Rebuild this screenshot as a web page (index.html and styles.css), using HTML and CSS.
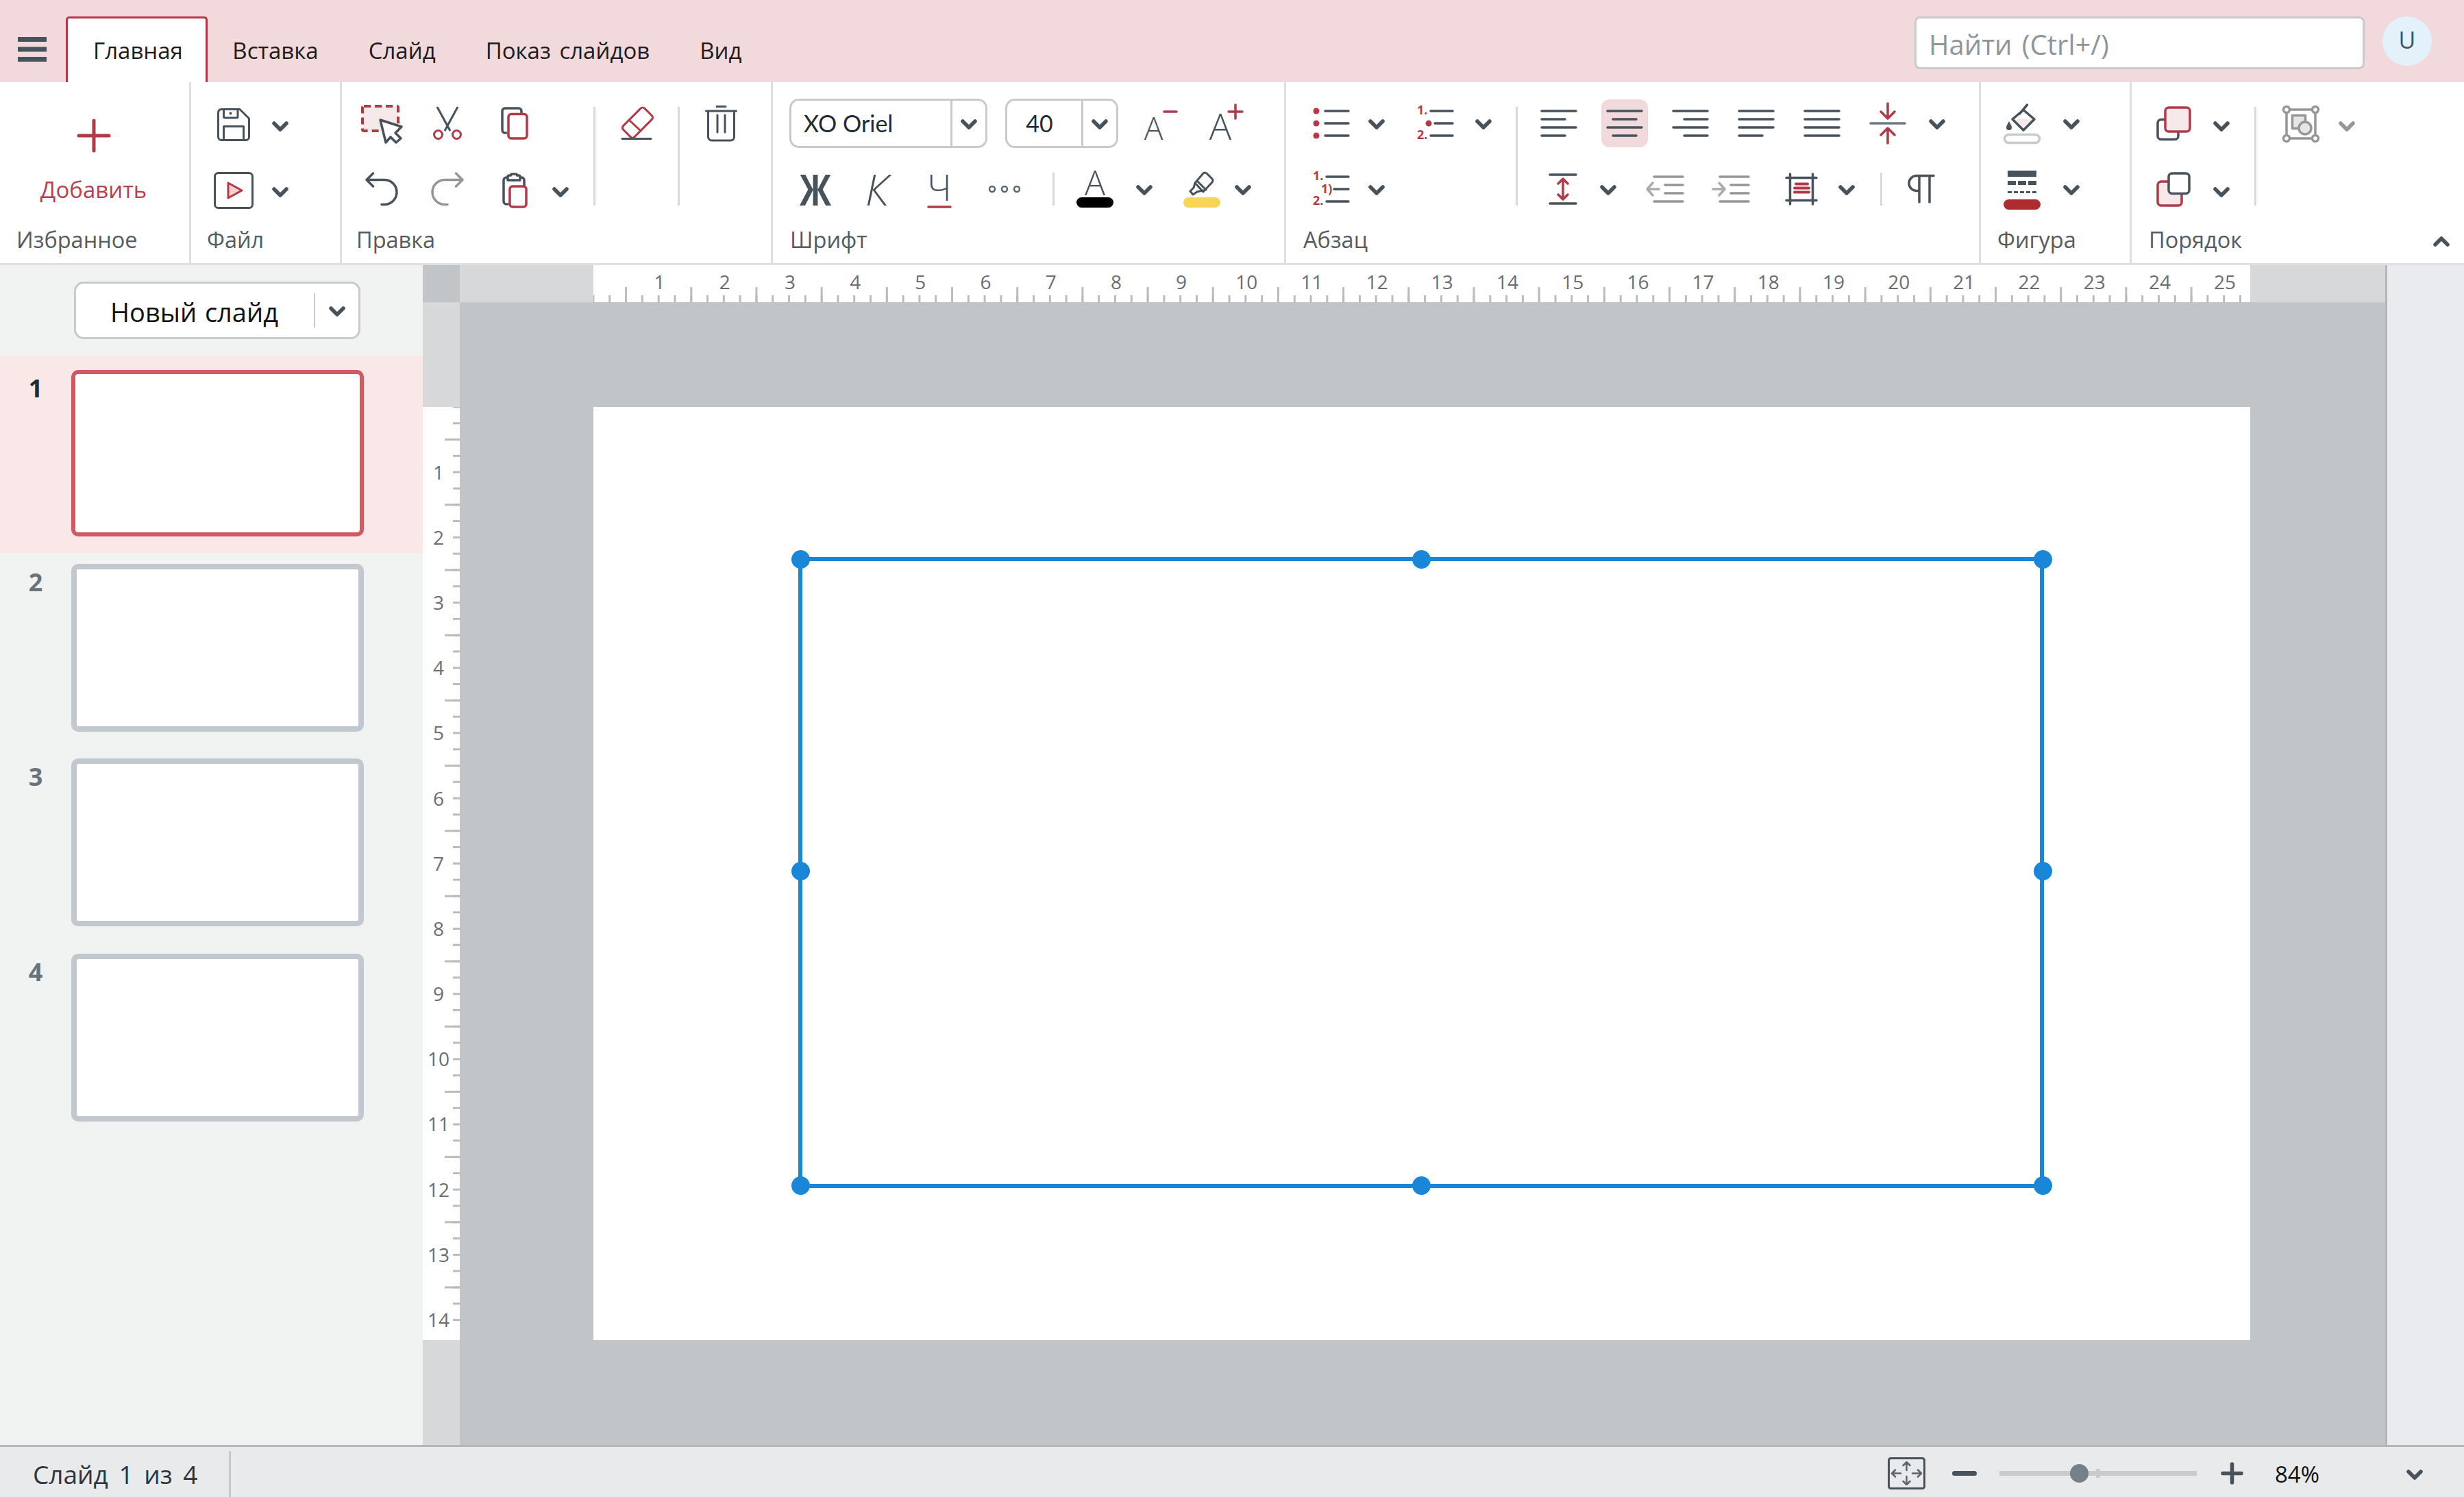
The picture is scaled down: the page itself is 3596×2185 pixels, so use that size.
FILE: index.html
```html
<!DOCTYPE html>
<html lang="ru">
<head>
    <meta charset="UTF-8">
    <title>Презентация</title>
    <link rel="stylesheet" href="styles.css">
</head>
<body>
    <svg class="defs"><symbol id="chev" viewBox="0 0 24 15"><path d="M3 3l9 9 9-9"/></symbol></svg>

    <header class="topbar">
        <svg class="burger" width="42" height="36" viewBox="0 0 42 36"><rect width="42" height="7"/><rect y="14.500" width="42" height="7"/><rect y="29" width="42" height="7"/></svg>
        <nav class="tabs">
            <a class="tab active">Главная</a>
            <a class="tab">Вставка</a>
            <a class="tab">Слайд</a>
            <a class="tab">Показ слайдов</a>
            <a class="tab">Вид</a>
        </nav>
        <div class="search">Найти (Ctrl+/)</div>
        <div class="avatar">U</div>
    </header>

    <section class="ribbon">
        <div class="group g-fav">
            <div class="add-btn">
                <svg class="ic" width="48" height="48" viewBox="0 0 48 48"><path class="r thick" d="M24 2v44M2 24h44"/></svg>
                <span>Добавить</span>
            </div>
            <div class="group-label">Избранное</div>
        </div>

        <div class="group g-file">
            <div class="tools cols-file">
                <svg class="ic thin mt4" width="48" height="48" viewBox="0 0 48 48"><path d="M6 1.500h27L46.500 15v27a4.500 4.500 0 0 1-4.500 4.500H6A4.500 4.500 0 0 1 1.500 42V6A4.500 4.500 0 0 1 6 1.500z"/><path d="M9.500 1.500V12a2 2 0 0 0 2 2H28a2 2 0 0 0 2-2V1.500M9.500 46.500V26.500h29v20"/><circle class="dark" cx="19.500" cy="7.500" r="2"/></svg>
                <svg class="chev chev-low"><use href="#chev"/></svg>
                <svg class="ic thin mt4" width="58" height="54" viewBox="0 0 58 54"><rect x="1.500" y="1.500" width="55" height="51" rx="5"/><path class="r" fill="#f6cfd1" d="M21 16l20 11-20 11z"/></svg>
                <svg class="chev chev-low"><use href="#chev"/></svg>
            </div>
            <div class="group-label">Файл</div>
        </div>

        <div class="group g-edit">
            <div class="tools cols-edit">
                <i class="vsep tall sep-a"></i>
                <i class="vsep tall sep-b"></i>
                <svg class="ic thin eraser" width="49" height="48" viewBox="0 0 49 48"><rect class="r" x="-22" y="-11.500" width="44" height="23" rx="4" transform="translate(24.500 23) rotate(-45)"/><path class="r" d="M12 19l17 16"/><path d="M2 46.500h42"/></svg>
                <svg class="ic thin trash" width="47" height="54" viewBox="0 0 47 54"><path d="M1.500 9h44M17 2.500h13M4.500 9v38a5 5 0 0 0 5 5h28a5 5 0 0 0 5-5V9M18 15v25M29 15v25"/></svg>
                <i class="cell"></i>

                <svg class="ic mt2" width="60" height="56" viewBox="0 0 60 56"><rect class="r tint dashed" x="2" y="2" width="52" height="36" rx="2"/><path fill="#fff" d="M28 22l31 10-9 9 8 8-7 6-8-8-7 8z"/></svg>
                <svg class="ic thin" width="42" height="48" viewBox="0 0 42 48"><path d="M6.500 1l18 33M35.500 1l-18 33"/><circle class="r" cx="7.500" cy="40.500" r="6"/><circle class="r" cx="34.500" cy="40.500" r="6"/></svg>
                <svg class="ic" width="40" height="48" viewBox="0 0 40 48"><path d="M8 38H6a4 4 0 0 1-4-4V6a4 4 0 0 1 4-4h20a4 4 0 0 1 4 4v4"/><rect class="r" x="11" y="10.500" width="27" height="35.500" rx="4"/></svg>

                <svg class="ic" width="48" height="48" viewBox="0 0 48 48"><path d="M3 10.500h25a18 18 0 0 1 0 36h-4M11.500 1L2 10.500l9.500 9.500"/></svg>
                <svg class="ic off flip" width="48" height="48" viewBox="0 0 48 48"><path d="M3 10.500h25a18 18 0 0 1 0 36h-4M11.500 1L2 10.500l9.500 9.500"/></svg>
                <svg class="ic mt3" width="37" height="52" viewBox="0 0 37 52"><path d="M8 46H6a4 4 0 0 1-4-4V11a4 4 0 0 1 4-4h2M26 7h2a4 4 0 0 1 4 4v9M8 11V6a2 2 0 0 1 2-2h2.500a2 2 0 0 1 2-2h5a2 2 0 0 1 2 2H24a2 2 0 0 1 2 2v5z"/><rect class="r" x="11" y="20" width="24" height="30" rx="4"/></svg>
                <svg class="chev chev-low"><use href="#chev"/></svg>
            </div>
            <div class="group-label">Правка</div>
        </div>

        <div class="group g-font">
            <div class="font-row">
                <div class="combo combo-font"><span class="combo-value">XO Oriel</span><span class="combo-arrow"><svg class="chev"><use href="#chev"/></svg></span></div>
                <div class="combo combo-size"><span class="combo-value">40</span><span class="combo-arrow"><svg class="chev"><use href="#chev"/></svg></span></div>
                <svg class="ic size-down" width="48" height="60" viewBox="0 0 48 60"><text class="glyph" x="13.500" y="54" font-size="46">A</text><path class="r" d="M29 13h18"/></svg>
                <svg class="ic size-up" width="48" height="60" viewBox="0 0 48 60"><text class="glyph" x="15" y="54" font-size="54">A</text><path class="r" d="M37 3v20M27 13h20"/></svg>
            </div>
            <div class="tools cols-font">
                <svg class="ic" width="52" height="60" viewBox="0 0 52 60"><text class="glyph heavy" x="26" y="54" font-size="63" textLength="46" lengthAdjust="spacingAndGlyphs">Ж</text></svg>
                <svg class="ic" width="40" height="60" viewBox="0 0 40 60"><text class="glyph italic" x="20" y="54" font-size="63" textLength="34" lengthAdjust="spacingAndGlyphs">К</text></svg>
                <svg class="ic" width="40" height="60" viewBox="0 0 40 60"><text class="glyph" x="20" y="47" font-size="53">Ч</text><path class="r" d="M4 56h32"/></svg>
                <svg class="ic dots" width="48" height="12" viewBox="0 0 48 12"><circle cx="6" cy="6" r="4"/><circle cx="24" cy="6" r="4"/><circle cx="42" cy="6" r="4"/></svg>
                <i class="vsep short"></i>
                <svg class="ic" width="54" height="60" viewBox="0 0 54 60"><text class="glyph" x="27" y="39" font-size="50">A</text><rect class="swatch-black" y="42" width="54" height="15" rx="7.500"/></svg>
                <svg class="chev"><use href="#chev"/></svg>
                <svg class="ic thin" width="54" height="60" viewBox="0 0 54 60"><path d="M29 7a3.500 3.500 0 0 1 5 0l8 8a3.500 3.500 0 0 1 0 5L29 34 17 21zM21 19l12 12M17 21l-2 7-5 5 4 5 6-4 4-1 5-1"/><rect class="swatch-yellow" y="42" width="54" height="15" rx="7.500"/></svg>
                <svg class="chev"><use href="#chev"/></svg>
            </div>
            <div class="group-label">Шрифт</div>
        </div>

        <div class="group g-para">
            <div class="para-tools">
                <div class="tools cols-lists">
                    <svg class="ic" width="54" height="48" viewBox="0 0 54 48"><path d="M18 6h34M18 24h34M18 42h34"/><circle class="red-dot" cx="5" cy="6" r="4.500"/><circle class="red-dot" cx="5" cy="24" r="4.500"/><circle class="red-dot" cx="5" cy="42" r="4.500"/></svg>
                    <svg class="chev"><use href="#chev"/></svg>
                    <svg class="ic" width="54" height="48" viewBox="0 0 54 48"><text class="num" x="0" y="11">1.</text><text class="num" x="0" y="47">2.</text><path d="M20 6h32M26 24h26M20 42h32"/><circle class="red-dot" cx="17" cy="24" r="4.500"/></svg>
                    <svg class="chev"><use href="#chev"/></svg>
                    <svg class="ic" width="54" height="48" viewBox="0 0 54 48"><text class="num" x="0" y="11">1.</text><text class="num" x="12" y="30">1)</text><text class="num" x="0" y="47">2.</text><path d="M20 6h32M31 24h21M20 42h32"/></svg>
                    <svg class="chev"><use href="#chev"/></svg>
                </div>
                <i class="vsep tall sep-para"></i>
                <div class="align-rows">
                    <div class="tools-row cols-align">
                        <svg class="ic" width="54" height="40" viewBox="0 0 54 40"><path d="M2 2h50M2 14h34M2 26h50M2 38h34"/></svg>
                        <div class="tool-on"><svg class="ic" width="54" height="40" viewBox="0 0 54 40"><path d="M2 2h50M10 14h34M2 26h50M10 38h34"/></svg></div>
                        <svg class="ic" width="54" height="40" viewBox="0 0 54 40"><path d="M2 2h50M18 14h34M2 26h50M18 38h34"/></svg>
                        <svg class="ic" width="54" height="40" viewBox="0 0 54 40"><path d="M2 2h50M2 14h50M2 26h50M2 38h34"/></svg>
                        <svg class="ic" width="54" height="40" viewBox="0 0 54 40"><path d="M2 2h50M2 14h50M2 26h50M2 38h50"/></svg>
                        <svg class="ic" width="54" height="60" viewBox="0 0 54 60"><path class="grey-line" d="M2 30h50"/><path class="r" d="M27 1v22M17 13l10 10 10-10M27 59V37M17 47l10-10 10 10"/></svg>
                        <svg class="chev"><use href="#chev"/></svg>
                    </div>
                    <div class="tools-row cols-indent">
                        <svg class="ic" width="42" height="46" viewBox="0 0 42 46"><path d="M2 2h38M2 44h38"/><path class="r" d="M21 8v30M14 15l7-7 7 7M14 31l7 7 7-7"/></svg>
                        <svg class="chev"><use href="#chev"/></svg>
                        <svg class="ic off" width="56" height="40" viewBox="0 0 56 40"><path d="M12 2h42M28 14h26M28 26h26M12 38h42"/><path class="paler" d="M19 20H2M10 11l-8 9 8 9"/></svg>
                        <svg class="ic off" width="56" height="40" viewBox="0 0 56 40"><path d="M12 2h42M28 14h26M28 26h26M12 38h42"/><path class="paler" d="M2 20h17M11 11l8 9-8 9"/></svg>
                        <svg class="ic" width="48" height="48" viewBox="0 0 48 48"><path d="M7.500 2v44M40.500 2v44M2 7.500h44M2 40.500h44"/><path class="r wide" d="M16 16.500h17M14 22.500h21M14 28.500h21"/></svg>
                        <svg class="chev"><use href="#chev"/></svg>
                        <i class="vsep short"></i>
                        <svg class="ic" width="39" height="42" viewBox="0 0 39 42"><path d="M37 1.500H12a10.500 10.500 0 0 0 0 22h4M16 1.500V40M31 1.500V40"/></svg>
                    </div>
                </div>
            </div>
            <div class="group-label">Абзац</div>
        </div>

        <div class="group g-shape">
            <div class="tools cols-shape">
                <svg class="ic mt2" width="54" height="58" viewBox="0 0 54 58"><path class="tint no-stroke" d="M14 22h31L29 37z"/><path d="M29 8.500l16 13.500-16 16L13 22zM23.500 14L34.500 1"/><path class="dark" d="M8 25c2 4 4 6 4 9a4 4 0 0 1-8 0c0-3 2-5 4-9z"/><rect class="pill-empty" x="1.500" y="44.500" width="51" height="12" rx="6"/></svg>
                <svg class="chev"><use href="#chev"/></svg>
                <svg class="mt3 line-style" width="54" height="57" viewBox="0 0 54 57"><rect x="6" width="42" height="9"/><rect x="6" y="15" width="12" height="6"/><rect x="21" y="15" width="12" height="6"/><rect x="36" y="15" width="12" height="6"/><rect x="6" y="30" width="6" height="3"/><rect x="15" y="30" width="6" height="3"/><rect x="24" y="30" width="6" height="3"/><rect x="33" y="30" width="6" height="3"/><rect x="42" y="30" width="6" height="3"/><rect class="swatch-red" y="42" width="54" height="15" rx="7.500"/></svg>
                <svg class="chev"><use href="#chev"/></svg>
            </div>
            <div class="group-label">Фигура</div>
        </div>

        <div class="group g-order">
            <div class="tools cols-order">
                <svg class="ic" width="50" height="50" viewBox="0 0 50 50"><rect x="2" y="19.500" width="30" height="29" rx="5"/><rect class="r tint" x="13" y="2" width="36" height="35" rx="5"/></svg>
                <svg class="chev chev-low"><use href="#chev"/></svg>
                <i class="vsep tall"></i>
                <svg class="ic off mt2" width="54" height="54" viewBox="0 0 54 54"><rect x="6" y="6" width="42" height="42"/><rect fill="#e6e6e6" x="14.500" y="14.500" width="19" height="19"/><circle fill="#e6e6e6" cx="33" cy="33" r="9"/><circle fill="#fff" cx="6" cy="6" r="4.500"/><circle fill="#fff" cx="48" cy="6" r="4.500"/><circle fill="#fff" cx="6" cy="48" r="4.500"/><circle fill="#fff" cx="48" cy="48" r="4.500"/></svg>
                <svg class="chev chev-low chev-off"><use href="#chev"/></svg>

                <svg class="ic" width="50" height="51" viewBox="0 0 50 51"><rect class="r tint" x="2" y="14" width="35" height="35" rx="5"/><rect fill="#fff" x="18" y="2" width="30" height="29.500" rx="5"/></svg>
                <svg class="chev chev-low"><use href="#chev"/></svg>
            </div>
            <div class="group-label label-row"><span>Порядок</span><svg class="chev chev-up"><use href="#chev"/></svg></div>
        </div>
    </section>

    <main class="workspace">
        <aside class="slides-panel">
            <div class="new-slide"><span class="new-slide-text">Новый слайд</span><span class="new-slide-arrow"><svg class="chev"><use href="#chev"/></svg></span></div>
            <div class="slide-row first current"><span class="slide-num">1</span><div class="thumb"></div></div>
            <div class="slide-row"><span class="slide-num">2</span><div class="thumb"></div></div>
            <div class="slide-row"><span class="slide-num">3</span><div class="thumb"></div></div>
            <div class="slide-row"><span class="slide-num">4</span><div class="thumb"></div></div>
        </aside>

        <div class="editor">
            <div class="hruler-row">
                <div class="ruler-corner"></div>
                <div class="hruler-gap left"></div>
                <div class="hruler">
                    <span>1</span><span>2</span><span>3</span><span>4</span><span>5</span><span>6</span><span>7</span><span>8</span><span>9</span><span>10</span><span>11</span><span>12</span><span>13</span><span>14</span><span>15</span><span>16</span><span>17</span><span>18</span><span>19</span><span>20</span><span>21</span><span>22</span><span>23</span><span>24</span><span>25</span>
                </div>
                <div class="hruler-gap"></div>
            </div>
            <div class="editor-body">
                <div class="vruler">
                    <div class="vruler-scale">
                        <span>1</span><span>2</span><span>3</span><span>4</span><span>5</span><span>6</span><span>7</span><span>8</span><span>9</span><span>10</span><span>11</span><span>12</span><span>13</span><span>14</span>
                    </div>
                </div>
                <div class="canvas">
                    <div class="slide">
                        <div class="shape">
                            <i class="handle tl"></i><i class="handle tc"></i><i class="handle tr"></i>
                            <i class="handle ml"></i><i class="handle mr"></i>
                            <i class="handle bl"></i><i class="handle bc"></i><i class="handle br"></i>
                        </div>
                    </div>
                </div>
            </div>
        </div>
        <div class="side-rail"></div>
    </main>

    <footer class="statusbar">
        <span class="status-text">Слайд 1 из 4</span>
        <i class="status-sep"></i>
        <div class="zoom-tools">
            <svg class="ic fit" width="55" height="47" viewBox="0 0 55 47"><rect class="fit-frame" x="1.500" y="1.500" width="52" height="44" rx="3"/><path class="fit-arrows" d="M27.500 7v12M22.500 12l5-5 5 5M27.500 40V28M22.500 35l5 5 5-5M6 23.500h13M11 18.500l-5 5 5 5M49 23.500H36M44 18.500l5 5-5 5"/></svg>
            <i class="zoom-minus"></i>
            <div class="zoom-track"><i class="zoom-mark"></i><i class="zoom-knob"></i></div>
            <svg class="zoom-plus" width="33" height="33" viewBox="0 0 33 33"><path d="M3 16.500h27M16.500 3v27"/></svg>
            <span class="zoom-value">84%</span>
            <svg class="chev zoom-chev"><use href="#chev"/></svg>
        </div>
    </footer>
</body>
</html>
```

FILE: styles.css
```css
html, body {
    margin: 0;
    padding: 0;
}

body {
    width: 3596px;
    height: 2185px;
    overflow: hidden;
    display: flex;
    flex-direction: column;
    font-family: "Open Sans", "Liberation Sans", sans-serif;
    font-size: 33px;
    color: #1f2a33;
    background-color: #fff;
}

i {
    display: block;
}

.defs {
    display: none;
}

/* top bar */
.topbar {
    flex: none;
    height: 120px;
    box-sizing: border-box;
    padding-top: 24px;
    display: flex;
    align-items: flex-start;
    background-color: #f2d9dc;
}

.burger {
    margin: 30px 0 0 26px;
    fill: #47525a;
}

.tabs {
    display: flex;
    margin-left: 28px;
    word-spacing: 4px;
}

.tab {
    height: 96px;
    box-sizing: border-box;
    padding: 0 33.500px;
    border: 3px solid transparent;
    border-bottom: 0;
    line-height: 94px;
    color: #1c1c1c;
}

.tab.active {
    background-color: #fff;
    border-color: #b23a48;
    border-radius: 5px 5px 0 0;
    padding: 0 33px 0 37px;
}

.search {
    margin-left: auto;
    width: 657px;
    height: 77px;
    box-sizing: border-box;
    padding-left: 18px;
    border: 3px solid #c8cacc;
    border-radius: 8px;
    background-color: #fff;
    font-size: 40px;
    word-spacing: 4px;
    line-height: 76px;
    color: #8f9699;
}

.avatar {
    width: 72px;
    height: 72px;
    margin: 0 47px 0 26px;
    border-radius: 50%;
    background-color: #e3f1fb;
    text-align: center;
    font-size: 34px;
    line-height: 68px;
    color: #47525a;
}

/* ribbon */
.ribbon {
    flex: none;
    height: 267px;
    box-sizing: border-box;
    display: flex;
    border-bottom: 3px solid #e0e0e0;
}

.group {
    box-sizing: border-box;
    padding-top: 12px;
    border-right: 3px solid #e0e0e0;
    display: flex;
    flex-direction: column;
}

.g-fav { width: 279px; padding-top: 0; }
.g-file { width: 220px; padding-left: 32px; }
.g-edit { width: 629px; padding-left: 18px; }
.g-font { width: 749px; padding-left: 8px; }
.g-para { width: 1014px; padding-left: 38px; }
.g-shape { width: 220px; padding-left: 20px; }
.g-order { flex: 1; padding-left: 21px; border-right: 0; }

.group-label {
    margin-top: auto;
    height: 60px;
    line-height: 52px;
    font-size: 32.500px;
    color: #555c60;
}

.g-fav .group-label { padding-left: 24px; }
.g-file .group-label { margin-left: -9px; }
.g-edit .group-label { padding-left: 3px; }
.g-font .group-label { padding-left: 17px; }
.g-para .group-label { margin-left: -13px; }
.g-shape .group-label { margin-left: 4px; }
.g-order .group-label { padding-left: 4px; }

.label-row {
    display: flex;
    align-items: flex-start;
    justify-content: space-between;
    padding-right: 21px;
}

.tools {
    display: grid;
    grid-auto-rows: 96px;
    place-items: center;
}

.tools-row {
    height: 96px;
    display: grid;
    place-items: center;
}

.cols-file { grid-template-columns: 60px 76px; }
.cols-edit { grid-template-columns: 80px 112px 84px 50px 48px 78px 42px 82px; }
.cols-font { grid-template-columns: 108px 72px 110px 80px 62px 60px 84px 84px 36px; }
.cols-lists { grid-template-columns: 56px 76px 96px 44px; }
.cols-align { grid-template-columns: repeat(6, 96px) 48px; margin-left: 12px; }
.cols-indent { grid-template-columns: 58px 74px 92px 100px 106px 26px 74px 44px; margin-left: 37px; }
.cols-shape { grid-template-columns: 80px 64px; }
.cols-order { grid-template-columns: 80px 60px 38px 95px 40px; }

.sep-a { grid-row: 1 / span 2; grid-column: 5; }
.sep-b { grid-row: 1 / span 2; grid-column: 7; }
.eraser { grid-row: 1; grid-column: 6; }
.trash { grid-row: 1; grid-column: 8; }
.cell { grid-row: 1; grid-column: 4; }

.cols-order .vsep { grid-row: 1 / span 2; grid-column: 3; }
.cols-order .off { grid-row: 1; grid-column: 4; }
.cols-order .chev-off { grid-row: 1; grid-column: 5; }

.para-tools {
    display: flex;
}

.sep-para {
    margin: 24px 0 0 25px;
}

.vsep {
    width: 3px;
    background-color: #d9d9d9;
}

.vsep.tall { height: 144px; }
.vsep.short { height: 48px; }

.mt2 { margin-top: 2px; }
.mt3 { margin-top: 3px; }
.mt4 { margin-top: 4px; }

/* chevrons */
.chev {
    width: 24px;
    height: 15px;
    margin-top: 2px;
    fill: none;
    stroke: #47525a;
    stroke-width: 5.5;
    stroke-linecap: round;
    stroke-linejoin: round;
}

.chev-low { margin-top: 8px; }
.chev-off { stroke: #969696; }
.chev-up { margin: 21px 0 0; transform: rotate(180deg); }

/* icons */
.ic {
    overflow: visible;
    fill: none;
    stroke: #47525a;
    stroke-width: 3.5;
    stroke-linecap: round;
    stroke-linejoin: round;
}

.ic.thin { stroke-width: 3; }
.ic.off { stroke: #969696; }
.flip { transform: scaleX(-1); }

.ic .r { stroke: #b23a48; }
.ic .thick { stroke-width: 5; }
.ic .wide { stroke-width: 4; }
.ic .tint { fill: #f7e9ea; }
.ic .no-stroke { stroke: none; }
.ic .dashed { stroke-width: 4; stroke-dasharray: 10 6; stroke-linecap: butt; }
.ic .dark { fill: #47525a; stroke: none; }
.ic .paler { stroke: #a9adb0; }
.ic .grey-line { stroke: #6f787e; }
.ic .red-dot { fill: #bd3645; stroke: none; }
.ic .swatch-black { fill: #000; stroke: none; }
.ic .swatch-yellow { fill: #f6d755; stroke: none; }
.ic .pill-empty { fill: #fff; stroke: #c8cacc; }

.dots { stroke-width: 2.5; stroke: #5b656c; }

.line-style { fill: #47525a; }
.line-style .swatch-red { fill: #ae2c2f; }

.glyph {
    font-family: "Open Sans", "Liberation Sans", sans-serif;
    font-weight: 300;
    text-anchor: middle;
    fill: #47525a;
    stroke: none;
}

.glyph.heavy { font-weight: 700; }
.glyph.italic { font-style: italic; }

.num {
    font-family: "Open Sans", "Liberation Sans", sans-serif;
    font-size: 18px;
    font-weight: 700;
    fill: #b23a48;
    stroke: none;
}

/* add button */
.add-btn {
    display: flex;
    flex-direction: column;
    align-items: center;
    padding: 54px 3px 0 0;
    color: #b5404f;
    font-size: 33px;
}

.add-btn span {
    margin-top: 33px;
    line-height: 44px;
}

/* font group */
.font-row {
    height: 96px;
    display: flex;
    align-items: center;
    padding-left: 16px;
}

.combo {
    height: 72px;
    box-sizing: border-box;
    display: flex;
    border: 3px solid #c8cacc;
    border-radius: 14px;
    font-family: Lato, "Open Sans", sans-serif;
    font-size: 34px;
    line-height: 66px;
}

.combo-font { width: 289px; }
.combo-size { width: 165px; margin-left: 26px; }

.combo-value {
    flex: 1;
    border-right: 3px solid #c8cacc;
}

.combo-font .combo-value { padding-left: 18px; }
.combo-size .combo-value { text-align: center; padding-right: 14px; }

.combo-arrow {
    width: 48px;
    display: flex;
    align-items: center;
    justify-content: center;
}

.size-down { margin-left: 38px; }
.size-up { margin-left: 48px; }

.tool-on {
    width: 68px;
    height: 70px;
    display: flex;
    align-items: center;
    justify-content: center;
    border-radius: 12px;
    background-color: #f2d9dc;
}

/* workspace */
.workspace {
    flex: 1;
    display: flex;
    min-height: 0;
}

.slides-panel {
    flex: none;
    width: 617px;
    box-sizing: border-box;
    padding-top: 24px;
    background-color: #f1f2f2;
}

.new-slide {
    width: 418px;
    height: 84px;
    margin: 0 0 24px 108px;
    box-sizing: border-box;
    display: flex;
    align-items: center;
    border: 3px solid #c8cacc;
    border-radius: 14px;
    background-color: #fff;
    font-size: 38px;
    word-spacing: 2px;
    color: #111;
}

.new-slide-text {
    width: 347px;
    padding: 4px 0 0 50px;
    box-sizing: border-box;
}

.new-slide-arrow {
    height: 50px;
    flex: 1;
    display: flex;
    align-items: center;
    justify-content: center;
    border-left: 2px solid #c8cacc;
    box-sizing: border-box;
}

.slide-row {
    display: flex;
    align-items: flex-start;
    padding: 15.500px 0 24px;
}

.slide-row.first {
    padding-top: 21px;
}

.slide-row.current {
    background-color: #fae8e9;
}

.slide-num {
    width: 104px;
    padding-top: 2px;
    text-align: center;
    font-size: 36px;
    font-weight: 700;
    line-height: 50px;
    color: #6a737a;
}

.current .slide-num {
    color: #1f2a33;
}

.thumb {
    width: 427px;
    height: 245px;
    box-sizing: border-box;
    border: 8px solid #c1c8ce;
    border-radius: 10px;
    background-color: #fff;
}

.current .thumb {
    height: 243px;
    border: 6px solid #d2595f;
}

.editor {
    flex: none;
    width: 2864px;
    display: flex;
    flex-direction: column;
}

.hruler-row {
    flex: none;
    height: 54px;
    display: flex;
}

.ruler-corner {
    width: 54px;
    background-color: #c1c5c8;
}

.hruler-gap {
    flex: 1;
    background-color: #d6d8da;
}

.hruler-gap.left {
    flex: none;
    width: 195px;
}

.hruler {
    width: 2418px;
    box-sizing: border-box;
    padding-left: 49px;
    display: flex;
    background-color: #fff;
    background-image:
        linear-gradient(90deg, #b9bbbd 3px, transparent 3px),
        linear-gradient(90deg, #b9bbbd 3px, transparent 3px);
    background-repeat: repeat-x;
    background-size: 23.8px 10px, 95.2px 22px;
    background-position: -1.5px bottom, 46.1px bottom;
}

.hruler span {
    flex: none;
    width: 95.2px;
    text-align: center;
    font-size: 28px;
    line-height: 48px;
    color: #6a6e72;
}

.editor-body {
    flex: 1;
    display: flex;
    min-height: 0;
}

.vruler {
    flex: none;
    width: 54px;
    box-sizing: border-box;
    padding: 153px 0;
    background-color: #d6d8da;
}

.vruler-scale {
    height: 1362px;
    box-sizing: border-box;
    padding: 47.6px 8px 0 0;
    background-color: #fff;
    background-image:
        linear-gradient(#fff, #fff),
        linear-gradient(#b9bbbd 3px, transparent 3px),
        linear-gradient(#b9bbbd 3px, transparent 3px);
    background-repeat: no-repeat, repeat-y, repeat-y;
    background-size: 100% 24px, 10px 23.8px, 22px 95.2px;
    background-position: left bottom, right -1.5px, right 46.1px;
}

.vruler-scale span {
    display: block;
    height: 95.2px;
    text-align: center;
    font-size: 28px;
    line-height: 95.2px;
    color: #6a6e72;
}

.canvas {
    flex: 1;
    box-sizing: border-box;
    padding: 153px 197px 0 195px;
    background-color: #c1c5c8;
}

.slide {
    position: relative;
    height: 1362px;
    background-color: #fff;
}

.shape {
    position: absolute;
    left: 299px;
    top: 219px;
    width: 1818px;
    height: 921px;
    box-sizing: border-box;
    border: 6px solid #1a86d8;
}

.handle {
    position: absolute;
    width: 27px;
    height: 27px;
    border-radius: 50%;
    background-color: #1a86d8;
}

.tl, .ml, .bl { left: -16px; }
.tr, .mr, .br { right: -18px; }
.tc, .bc { left: 50%; margin-left: -13px; }
.tl, .tc, .tr { top: -16px; }
.bl, .bc, .br { bottom: -16px; }
.ml, .mr { top: 50%; margin-top: -16px; }

.side-rail {
    flex: 1;
    border-left: 3px solid #b3b7ba;
    background-color: #e9ebee;
}

/* status bar */
.statusbar {
    flex: none;
    height: 76px;
    box-sizing: border-box;
    display: flex;
    align-items: center;
    border-top: 3px solid #b3b7ba;
    background-color: #e8eaec;
}

.status-text {
    margin: 6px 0 0 48px;
    font-size: 37px;
    word-spacing: 6px;
    color: #2b3640;
}

.status-sep {
    align-self: flex-end;
    width: 3px;
    height: 67px;
    margin-left: 46px;
    background-color: #c4c7ca;
}

.zoom-tools {
    margin: 3px 0 0 auto;
    padding-right: 60px;
    display: flex;
    align-items: center;
}

.fit-frame {
    stroke-width: 3;
}

.fit-arrows {
    stroke: #5b656c;
    stroke-width: 2.5;
}

.zoom-minus {
    width: 36px;
    height: 7px;
    margin-left: 39px;
    border-radius: 4px;
    background-color: #47525a;
}

.zoom-track {
    position: relative;
    width: 288px;
    height: 7px;
    margin-left: 33px;
    background-color: #c8cacc;
}

.zoom-knob {
    position: absolute;
    left: 103px;
    top: -10px;
    width: 27px;
    height: 27px;
    border-radius: 50%;
    background-color: #76808a;
}

.zoom-mark {
    position: absolute;
    left: 141px;
    top: -3px;
    width: 6px;
    height: 13px;
    background-color: #c8cacc;
}

.zoom-plus {
    margin-left: 35px;
    fill: none;
    stroke: #47525a;
    stroke-width: 5.5;
    stroke-linecap: round;
}

.zoom-value {
    margin: 2px 0 0 46px;
    width: 65px;
    font-size: 33px;
    color: #111;
}

.zoom-chev {
    margin: 4px 0 0 127px;
}
```
